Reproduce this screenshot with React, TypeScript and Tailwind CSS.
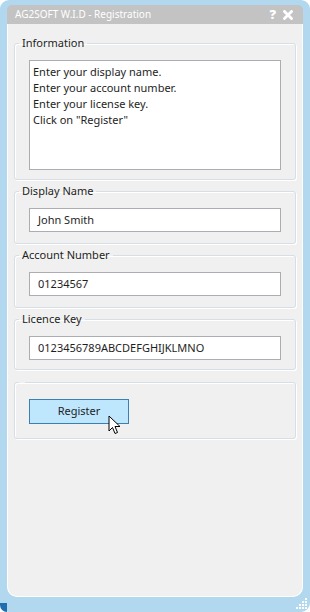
import React from "react";

const font = { fontFamily: '"Segoe UI", "Noto Sans", "Open Sans", sans-serif' };

function Group({ title, children, className = "" }: { title?: string; children: React.ReactNode; className?: string }) {
  return (
    <fieldset className={`border border-[#d5dfe5] rounded-[3px] shadow-[inset_1px_1px_0_#ffffff,1px_1px_0_#ffffff] px-[14px] ${className}`}>
      <legend className="ml-[-10px] px-[3px] text-[11px] leading-[16px] text-[#1e1e1e] h-[16px]">{title ?? ""}</legend>
      {children}
    </fieldset>
  );
}

function TextBox({ value }: { value: string }) {
  return (
    <div className="h-[24px] bg-white border border-[#abadb3] flex items-center px-[8px] text-[11px] text-[#1e1e1e]">
      {value}
    </div>
  );
}

export default function App() {
  return (
    <div className="w-[310px] h-[612px] bg-white" style={font}>
      <div className="relative w-[310px] h-[612px] bg-[#b1d8ee] rounded-[9px] pt-[5px] px-[7px] pb-[15px] flex flex-col">
        {/* Title bar */}
        <div className="h-[19px] bg-[#c3c3c3] rounded-t-[5px] flex items-center justify-between pl-[8px] pr-[10px]">
          <span className="text-[10px] text-white">AG2SOFT W.I.D - Registration</span>
          <div className="flex items-center gap-[7px] text-white font-black text-[13px] leading-none">
            <span>?</span>
            <svg width="10" height="10" viewBox="0 0 10 10">
              <path d="M1.5 1.5 L8.5 8.5 M8.5 1.5 L1.5 8.5" stroke="#ffffff" strokeWidth="2.8" strokeLinecap="square" />
            </svg>
          </div>
        </div>

        {/* Content */}
        <div className="flex-1 bg-[#f0f0f0] border-l border-r border-b border-white rounded-b-[10px] px-[6px] pt-[11px] flex flex-col gap-[3px]">
          <Group title="Information" className="pt-[9px] pb-[9px]">
            <div className="h-[110px] bg-white border border-[#abadb3] px-[3px] pt-[3px] text-[11px] leading-[16px] text-[#1e1e1e]">
              <div>Enter your display name.</div>
              <div>Enter your account number.</div>
              <div>Enter your license key.</div>
              <div>Click on "Register"</div>
            </div>
          </Group>

          <Group title="Display Name" className="pt-[9px] pb-[11px]">
            <TextBox value="John Smith" />
          </Group>

          <Group title="Account Number" className="pt-[9px] pb-[11px]">
            <TextBox value="01234567" />
          </Group>

          <Group title="Licence Key" className="pt-[9px] pb-[9px]">
            <TextBox value="0123456789ABCDEFGHIJKLMNO" />
          </Group>

          <Group className="pt-[9px] pb-[14px] mt-[1px]">
            <div className="relative w-[100px]">
              <div className="h-[25px] bg-[#bee6fd] border border-[#3c7fb1] flex items-center justify-center text-[11px] text-[#1e1e1e]">
                Register
              </div>
              <svg className="absolute left-[79px] top-[16px]" width="14" height="21" viewBox="0 0 14 21">
                <path d="M1 1 L1 16 L4.5 12.5 L7 18.5 L9.5 17.5 L7 11.5 L12 11.5 Z" fill="#ffffff" stroke="#000000" strokeWidth="1" strokeLinejoin="round" />
              </svg>
            </div>
          </Group>
        </div>

        {/* bottom-left corner accent */}
        <div className="absolute left-0 bottom-0 w-[7px] h-[9px] bg-[#1f6fb0] rounded-bl-[9px]" />

        {/* resize grip */}
        <svg className="absolute right-[2px] bottom-[2px]" width="12" height="12" viewBox="0 0 12 12">
          {[
            [9, 0], [6, 3], [9, 3], [3, 6], [6, 6], [9, 6], [0, 9], [3, 9], [6, 9], [9, 9],
          ].map(([x, y], i) => (
            <rect key={i} x={x} y={y} width="2" height="2" fill="#ffffff" />
          ))}
        </svg>
      </div>
    </div>
  );
}
